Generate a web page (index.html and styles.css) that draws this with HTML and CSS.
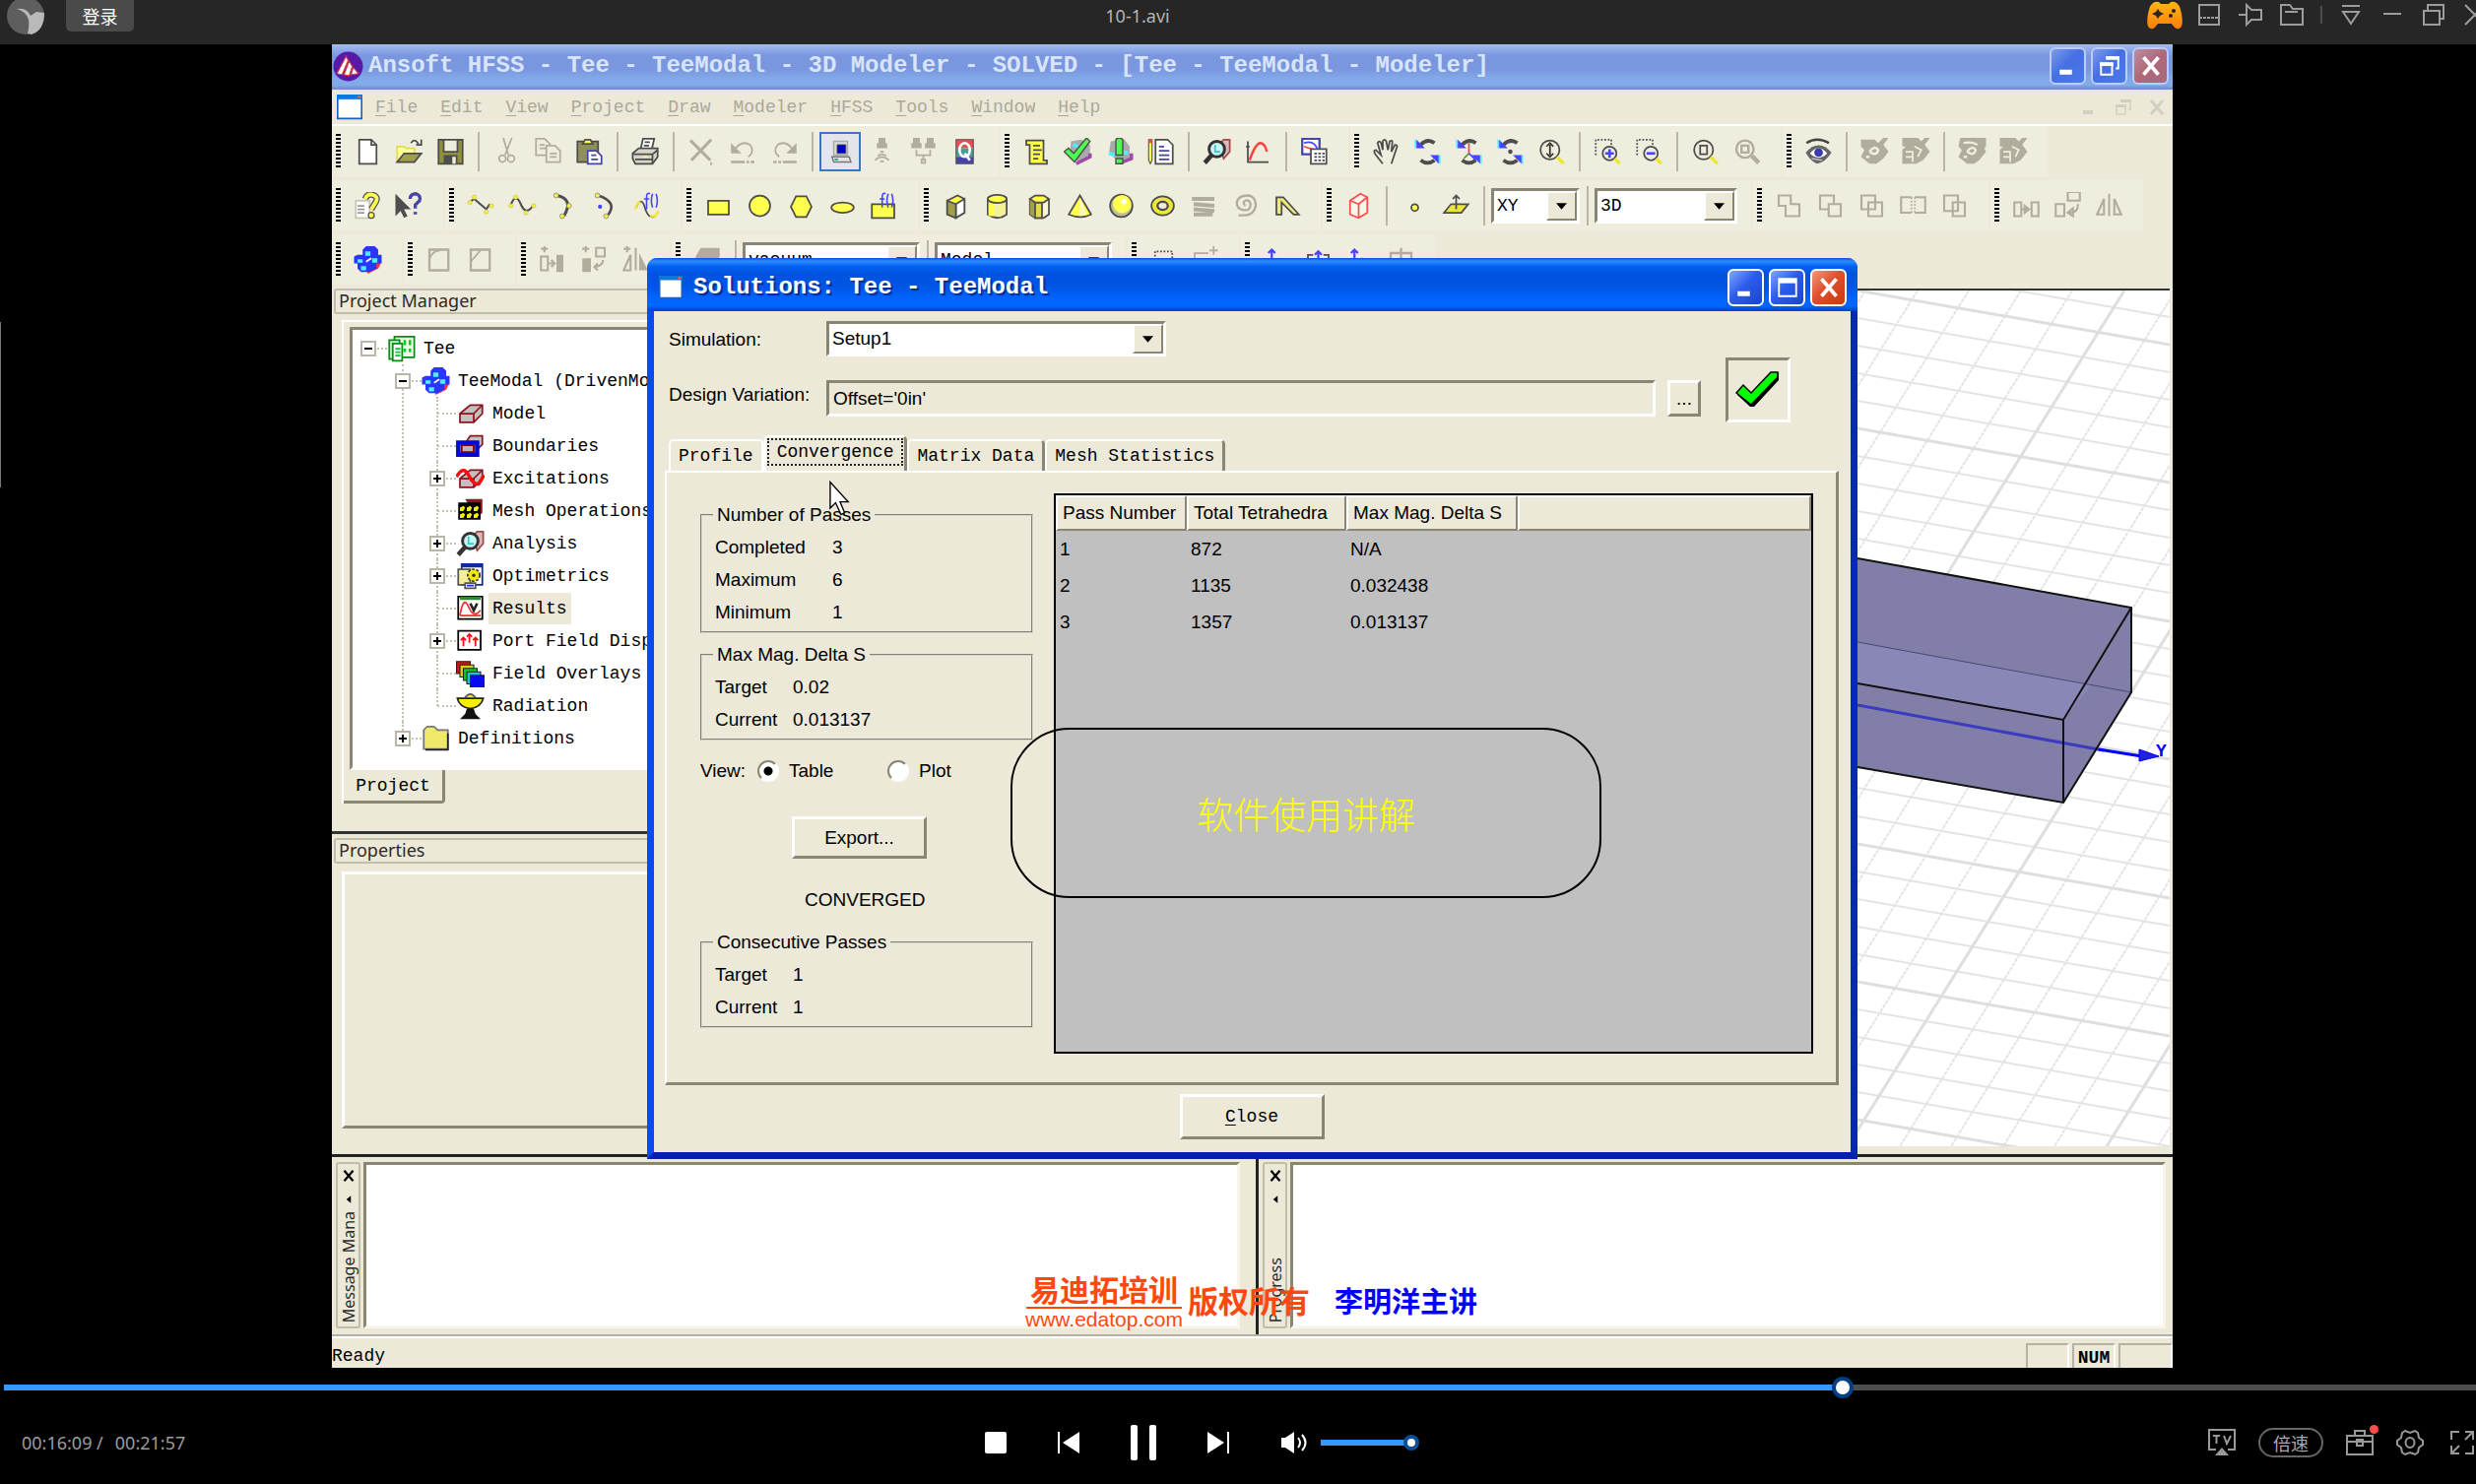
FILE: index.html
```html
<!DOCTYPE html>
<html lang="zh-CN">
<head>
<meta charset="utf-8">
<meta name="viewport" content="width=device-width, initial-scale=1">
<title>10-1.avi</title>
<link rel="stylesheet" href="styles.css">
</head>
<body>
<svg class="sprite" aria-hidden="true">
  <symbol id="new" viewBox="0 0 16 16"><path d="M3 1h7l3 3v11H3z" fill="#fff" stroke="#4d4d4d"/><path d="M10 1v3h3" fill="none" stroke="#4d4d4d"/></symbol>
  <symbol id="open" viewBox="0 0 16 16"><path d="M1 14V5h4l1 1h5v3" fill="#ffff9d" stroke="#e0dc50"/><path d="M1 14l4-5h10l-4 5z" fill="#a0a048" stroke="#4d4d4d"/><path d="M9 3q2-3 4 0v1m2-3v3h-3" fill="none" stroke="#4d4d4d"/></symbol>
  <symbol id="save" viewBox="0 0 16 16"><path d="M1 1h14v14H1z" fill="#8f8f3c" stroke="#4d4d4d"/><path d="M4 1h8v7H4z" fill="#efedde" stroke="#4d4d4d"/><path d="M4 10h8v5H4z" fill="#4d4d4d"/><path d="M9 11h2v4H9z" fill="#efedde"/></symbol>
  <symbol id="cut" viewBox="0 0 16 16"><g fill="none" stroke="#b0ad9c"><path d="M6 0l3 10M11 0L7 10"/><circle cx="5.500" cy="12" r="2"/><circle cx="10.500" cy="12" r="2"/></g></symbol>
  <symbol id="copy" viewBox="0 0 16 16"><g fill="#efedde" stroke="#b0ad9c"><path d="M1 .5h5l3 3V10H1z"/><path d="M7 4.500h5l3 3V14H7z"/><path d="M3 4h3M3 6h4M9 9h4M9 11h4" /></g></symbol>
  <symbol id="paste" viewBox="0 0 16 16"><path d="M1 2h12v12H1z" fill="#8f8f5a" stroke="#4d4d4d"/><path d="M4 3.500h6L8.500 1h-3z" fill="#ffff4d" stroke="#4d4d4d"/><path d="M7 7.500h5l3 3V15H7z" fill="#fff" stroke="#4646a8"/><path d="M9 10h3M9 12.500h4" stroke="#4646a8"/></symbol>
  <symbol id="print" viewBox="0 0 16 16"><path d="M5 7l1.500-6.500H13L11.500 7z" fill="#fff" stroke="#4d4d4d"/><path d="M7.500 2.500h3M7 4.500h3" stroke="#4d4d4d"/><path d="M.5 9L4 6h11v5l-3 4H2L.5 12z" fill="#d8d6c8" stroke="#4d4d4d"/><path d="M1 9.500h11L15 7M2 12.500h10M12 9.500V15" fill="none" stroke="#4d4d4d"/><path d="M7 11h2" stroke="#ffff4d"/></symbol>
  <symbol id="del" viewBox="0 0 16 16"><path d="M1.500 1.500L13 13M13.500 1L2 13M13 15h1" stroke="#b0ad9c" stroke-width="1.800"/></symbol>
  <symbol id="undo" viewBox="0 0 16 16"><path d="M3 7q4-6 9-3 3 4-1 7" fill="none" stroke="#b0ad9c"/><path d="M1 3v6h6z" fill="#b0ad9c"/><path d="M1 14h8m1 0h1.500m1 0h2" stroke="#b0ad9c" stroke-width="1.500"/></symbol>
  <symbol id="redo" viewBox="0 0 16 16"><path d="M13 7Q9 1 4 4q-3 4 1 7" fill="none" stroke="#b0ad9c"/><path d="M15 3v6H9z" fill="#b0ad9c"/><path d="M15 14H7m-1 0H4.500m-1 0h-2" stroke="#b0ad9c" stroke-width="1.500"/></symbol>
  <symbol id="pc" viewBox="0 0 16 16"><path d="M4 2h8v8H4z" fill="#d9d9d9" stroke="#aaa" stroke-width=".8"/><path d="M6 4h5v5H6z" fill="#00c" stroke="#444" stroke-width=".5"/><path d="M3 11h10l1 3H4z" fill="#e4e4e4" stroke="#777" stroke-width=".8"/><path d="M4.500 12.500h2" stroke="#0a8"/></symbol>
  <symbol id="remote" viewBox="0 0 16 16"><path d="M6 0h4v3h1v3H5V3h1z" fill="#b0ad9c"/><path d="M7 8h2M5.500 10.500q2.500-2 5 0M4 13q4-4 8 0M7 14q1-1 2 0" fill="none" stroke="#b0ad9c"/></symbol>
  <symbol id="dist" viewBox="0 0 16 16"><path d="M2 0h4v3h1v3H1V3h1zM10 0h4v3h1v3H9V3h1z" fill="#b0ad9c"/><path d="M4 7v3h8V7M8 10v2M7 12.500h2v2H7z" fill="none" stroke="#b0ad9c"/></symbol>
  <symbol id="queue" viewBox="0 0 16 16"><path d="M3 1h10v5H3z" fill="#f04a52"/><path d="M3 6h10v5H3z" fill="#509c94"/><path d="M3 11h10v4H3z" fill="#4444a4"/><path d="M3 1h10v14H3z" fill="none" stroke="#555" stroke-width=".6"/><ellipse cx="8" cy="7" rx="3" ry="4" fill="none" stroke="#fff" stroke-width="1.500"/><path d="M8 9l3 4" stroke="#fff" stroke-width="1.500"/></symbol>
  <symbol id="notes" viewBox="0 0 16 16"><path d="M2 1.500h10V13h2v2H4V4H2z" fill="#ffff4d" stroke="#4d4d4d"/><path d="M6 4.500h4M6 7h5M6 9.500h4M6 12h3" stroke="#4d4d4d"/></symbol>
  <symbol id="validate" viewBox="0 0 16 16"><path d="M4 2l6-1 5 3v8l-6 2-6-2z" fill="#a9a9ad"/><path d="M7 15l8-4v-2" fill="none" stroke="#a04aa8" stroke-width="2"/><path d="M5 4l3 1M4 11h3" stroke="#4defff" stroke-width="2"/><path d="M0 8l2.500-2 3 3L13 0l2 2L6 14z" fill="#4dff4d" stroke="#4d4d4d" stroke-width=".8"/></symbol>
  <symbol id="analyze" viewBox="0 0 16 16"><path d="M3 2l8-1 3 4v7l-6 2-6-5z" fill="#a9a9ad"/><path d="M10 14l5-2V9" fill="none" stroke="#a04aa8" stroke-width="2"/><path d="M2 9l4 1M10 8l3 1" stroke="#4defff" stroke-width="2"/><path d="M6 1Q8 -1 10 1v9H6zM6 12h4v3H6z" fill="#4dff4d" stroke="#4d4d4d" stroke-width=".8"/></symbol>
  <symbol id="editnote" viewBox="0 0 16 16"><path d="M1 1h2v12l-1 2-1-2z" fill="#ffff4d" stroke="#4d4d4d" stroke-width=".6"/><path d="M1 1h2v2H1z" fill="#f44"/><path d="M5 1h7l3 3v11H5z" fill="#fff" stroke="#4d4d4d"/><path d="M7 5h3M7 7.500h6M7 10h6M7 12.500h6" stroke="#4646a8"/></symbol>
  <symbol id="lens" viewBox="0 0 16 16"><path d="M9 4l3-3h3.500v7L12 12z" fill="#d8b8b8" stroke="#a24a4a"/><circle cx="8" cy="6.500" r="4.500" fill="#c8f4f4" stroke="#333" stroke-width="1.700"/><path d="M7 4v4h3" fill="none" stroke="#3cc" /><path d="M5 10l-4 4.500" stroke="#333" stroke-width="2.600"/></symbol>
  <symbol id="curve" viewBox="0 0 16 16"><path d="M2 2v12h12M1 5h2" fill="none" stroke="#4d4d4d"/><path d="M3 13q3-9 6-10 3 0 4 5" fill="none" stroke="#ff4040" stroke-width="1.400"/></symbol>
  <symbol id="plots" viewBox="0 0 16 16"><path d="M1 .5h10v9H1z" fill="#fff" stroke="#4646a8" stroke-width="1.300"/><path d="M2 3q6-2 8 4" fill="none" stroke="#44f"/><path d="M2 5l6 2" stroke="#f44"/><path d="M6 6.500h9V15H6z" fill="#fff" stroke="#4d4d4d"/><path d="M8 9h6M8 11h6M8 13h6" stroke="#4d4d4d" stroke-dasharray="1.500 .8"/></symbol>
  <symbol id="hand" viewBox="0 0 16 16"><path d="M6 15l-4-5q-2-3 0-3l3 3-2-7q1-2 2 0l1 4V2q1-2 2 0l1 5 1-5q2-1 1.500 1l-.5 5 2-4q2 0 1 2l-3 9" fill="none" stroke="#4d4d4d"/></symbol>
  <symbol id="rotate" viewBox="0 0 16 16"><path d="M4 4q4-4 8-1M4 13q4 3 8 0" fill="none" stroke="#4d4d4d" stroke-width="2.200"/><path d="M1.500 1v5h5zM14.500 15v-5h-5z" fill="#4545ff"/><path d="M1 1v5M15 15v-5" stroke="#4defff"/></symbol>
  <symbol id="rotaxis" viewBox="0 0 16 16"><use href="#rotate"/><path d="M8 3v6" stroke="#f44"/><path d="M8 9l-3 3" stroke="#494"/><path d="M8 9l4 4" stroke="#44f"/></symbol>
  <symbol id="rotpt" viewBox="0 0 16 16"><use href="#rotate"/><circle cx="8" cy="8" r="1.300" fill="#4d4d4d"/></symbol>
  <symbol id="zoom" viewBox="0 0 16 16"><circle cx="7" cy="7" r="5.500" fill="#efedde" stroke="#4d4d4d"/><path d="M7 4v6M5 5l2-2 2 2M5 9l2 2 2-2" fill="none" stroke="#333"/><path d="M11 11l4 4" stroke="#ece83a" stroke-width="2"/></symbol>
  <symbol id="zin" viewBox="0 0 16 16"><path d="M1 10V1h9v3" fill="none" stroke="#4d4d4d" stroke-dasharray="1 1"/><circle cx="9" cy="9" r="4" fill="#efedde" stroke="#4d4d4d"/><path d="M6.500 9h5M9 6.500v5" stroke="#4545ff" stroke-width="1.500"/><path d="M12 12l3 3" stroke="#ece83a" stroke-width="2"/></symbol>
  <symbol id="zout" viewBox="0 0 16 16"><path d="M1 10V1h9v3" fill="none" stroke="#4d4d4d" stroke-dasharray="1 1"/><circle cx="9" cy="9" r="4" fill="#efedde" stroke="#4d4d4d"/><path d="M6.500 9h5" stroke="#4545ff" stroke-width="1.500"/><path d="M12 12l3 3" stroke="#ece83a" stroke-width="2"/></symbol>
  <symbol id="fit" viewBox="0 0 16 16"><circle cx="7" cy="7" r="5.500" fill="#efedde" stroke="#4d4d4d"/><path d="M5 4.500h4v5H5z" fill="none" stroke="#4d4d4d"/><path d="M11 11l4 4" stroke="#ece83a" stroke-width="2"/></symbol>
  <symbol id="fitoff" viewBox="0 0 16 16"><g fill="none" stroke="#b0ad9c" stroke-width="1.400"><circle cx="7" cy="6.500" r="5"/><path d="M5 4.500h4v4H5z"/><path d="M11 10.500l4 4" stroke-width="2.500"/></g></symbol>
  <symbol id="eye" viewBox="0 0 16 16"><path d="M1 3q6-4 13 0" fill="none" stroke="#444" stroke-width="1.400"/><path d="M.5 8.500Q8 0 15.500 8.500 12 14 7 15 3 13 .5 8.500z" fill="#666"/><path d="M3 9q5-6 10 0-5 5-10 0z" fill="#fff"/><circle cx="8" cy="8.500" r="2.500" fill="#3c3ca8"/><path d="M4 12l6 1" stroke="#bbb"/></symbol>
  <symbol id="eyex" viewBox="0 0 16 16"><path d="M0 1h8l2 2 3-3h3l-3 4 3 4-3 4-4 3H5l-5-4 2-4-2-2z" fill="#b0ad9c"/><path d="M5 8q3-4 5-1-1 4-5 1M3 11h2" fill="none" stroke="#efedde" stroke-width="1.500"/></symbol>
  <symbol id="eyebox" viewBox="0 0 16 16"><path d="M0 0h9l2 2 2-2h3l-3 4 3 4-4 5-4 2H0V7l2-2H0z" fill="#b0ad9c"/><path d="M2 8h4v6M2 11h4M7 5l4 2-2 4" fill="none" stroke="#efedde"/></symbol>
  <symbol id="eyeoff" viewBox="0 0 16 16"><path d="M1 0h15v5l-1 1 1 2-4 5-3 2H5l-5-4 2-4-2-2z" fill="#b0ad9c"/><path d="M5 8q3-4 5-1-1 4-5 1M3 3q5-1 8 1M3 11h2" fill="none" stroke="#efedde" stroke-width="1.300"/></symbol>
  <symbol id="help" viewBox="0 0 16 16"><path d="M1 5h8v10H1z" fill="#fff" stroke="#c8c6b4"/><path d="M2 8h4M2 10h4M2 12h4" stroke="#999"/><path d="M6.500 4q1-3 4-2.500 4 1 2 4.500l-2.500 4" fill="none" stroke="#4d4d4d" stroke-width="3.600"/><path d="M6.500 4q1-3 4-2.500 4 1 2 4.500l-2.500 4" fill="none" stroke="#ffff4d" stroke-width="2.200"/><circle cx="10" cy="13.500" r="1.700" fill="#ffff4d" stroke="#4d4d4d" stroke-width=".7"/></symbol>
  <symbol id="what" viewBox="0 0 16 16"><path d="M0 1v13l3-3 2 4 2-1-2-4h4z" fill="#4d4d4d"/><path d="M8.500 4q0-3 3.500-3 3 1 2 4l-2.500 2.500v2" fill="none" stroke="#4646a8" stroke-width="1.900"/><path d="M10.500 11.500h2V13h-2z" fill="#4646a8"/></symbol>
  <symbol id="line" viewBox="0 0 16 16"><path d="M1 6l3-2 7 6 2-3" fill="none" stroke="#4d4d4d" stroke-width="1.200"/><g fill="#f4f04a" stroke="#c9c53a" stroke-width=".4"><circle cx="1.500" cy="6" r="1.200"/><circle cx="4" cy="3" r="1.200"/><circle cx="11" cy="11.500" r="1.200"/><circle cx="14" cy="8" r="1.200"/></g></symbol>
  <symbol id="spline" viewBox="0 0 16 16"><path d="M1 8q3-8 6-1t7 1" fill="none" stroke="#4d4d4d" stroke-width="1.200"/><g fill="#f4f04a" stroke="#c9c53a" stroke-width=".4"><circle cx="1.200" cy="8" r="1.200"/><circle cx="4" cy="3" r="1.200"/><circle cx="10" cy="12" r="1.200"/><circle cx="14.500" cy="8" r="1.200"/></g></symbol>
  <symbol id="arc3" viewBox="0 0 16 16"><path d="M4 2q10 2 4 12" fill="none" stroke="#4d4d4d" stroke-width="1.700"/><g fill="#f4f04a" stroke="#777" stroke-width=".4"><circle cx="3.500" cy="2" r="1.400"/><circle cx="11" cy="8" r="1.400"/><circle cx="7" cy="14" r="1.400"/></g></symbol>
  <symbol id="arcc" viewBox="0 0 16 16"><path d="M4 2q12 4 5 12" fill="none" stroke="#4d4d4d" stroke-width="1.500"/><g fill="#f4f04a" stroke="#777" stroke-width=".4"><circle cx="3.500" cy="2" r="1.400"/><circle cx="8.500" cy="14" r="1.400"/></g><circle cx="5" cy="8.500" r="1.200" fill="#4545ff"/></symbol>
  <symbol id="fx" viewBox="0 0 16 16"><path d="M2 9q3-7 5 0t6 5" fill="none" stroke="#4d4d4d"/><path d="M1.500 10q1-4 3-4M10 14h3l2-3" fill="none" stroke="#ece83a" stroke-width="1.500"/><path d="M10 1q-2-1-2 2v7M6.500 4h3M11.500 1q-1.500 4 0 8M13.500 1q1.500 4 0 8" fill="none" stroke="#4545ff" stroke-width=".9"/></symbol>
  <symbol id="rect" viewBox="0 0 16 16"><path d="M2 5h12v8H2z" fill="#ffff4d" stroke="#4d4d4d"/></symbol>
  <symbol id="circle" viewBox="0 0 16 16"><circle cx="8" cy="8" r="6" fill="#ffff4d" stroke="#4d4d4d"/></symbol>
  <symbol id="hex" viewBox="0 0 16 16"><path d="M5 2.500h6l3 6-3 6H5l-3-6z" fill="#ffff4d" stroke="#4d4d4d"/></symbol>
  <symbol id="ell" viewBox="0 0 16 16"><ellipse cx="8" cy="9" rx="6.500" ry="3" fill="#ffff4d" stroke="#4d4d4d"/></symbol>
  <symbol id="rectfx" viewBox="0 0 16 16"><path d="M1 7h13v8H1z" fill="#ffff4d" stroke="#4d4d4d"/><path d="M9 1Q7 0 7 3v6M5.500 4h3M10.500 1q-1.500 4 0 8M12.500 1q1.500 4 0 8" fill="none" stroke="#4545ff" stroke-width=".9"/></symbol>
  <symbol id="box" viewBox="0 0 16 16"><path d="M3 5l6-3 4 2v8l-5 3-5-2z" fill="#ffff4d" stroke="#4d4d4d"/><path d="M8 7l5-3v8l-5 3z" fill="#fff" stroke="#4d4d4d"/><path d="M3 5l5 2v8l-5-2z" fill="#a0a048" stroke="#4d4d4d"/></symbol>
  <symbol id="cyl" viewBox="0 0 16 16"><path d="M2.500 4v9q5.500 4 11 0V4" fill="#f3f09a" stroke="#4d4d4d"/><path d="M3 5h3v9H3z" fill="#ffff4d"/><ellipse cx="8" cy="4" rx="5.500" ry="2.300" fill="#ffff4d" stroke="#4d4d4d"/></symbol>
  <symbol id="prism" viewBox="0 0 16 16"><path d="M3 4v9l3 2h5l3-2V4" fill="#f7f7dc" stroke="#4d4d4d"/><path d="M3 4l3 2v9l-3-2z" fill="#a0a048"/><path d="M6 6h4v9H6z" fill="#e0dc40" stroke="#4d4d4d"/><path d="M3 4l3-2h5l3 2-3 2H6z" fill="#ffff4d" stroke="#4d4d4d"/></symbol>
  <symbol id="cone" viewBox="0 0 16 16"><path d="M8 2l6.500 11q-6 3-13 0z" fill="#ffff4d" stroke="#4d4d4d"/><path d="M8 3l4 10-4 1z" fill="#fff9c0"/></symbol>
  <symbol id="sphere" viewBox="0 0 16 16"><circle cx="8" cy="8" r="6.500" fill="#c0bd9a" stroke="#4d4d4d"/><circle cx="8.500" cy="7" r="5.300" fill="#ffff4d"/><circle cx="9.500" cy="5.500" r="1.600" fill="#fffff0"/></symbol>
  <symbol id="torus" viewBox="0 0 16 16"><ellipse cx="8" cy="8" rx="6.500" ry="5.500" fill="#ece83a" stroke="#4d4d4d"/><ellipse cx="8" cy="8" rx="3" ry="2.300" fill="#efedde" stroke="#4d4d4d" stroke-width="1.300"/></symbol>
  <symbol id="helix" viewBox="0 0 16 16"><path d="M1 4h13M2 7l12 1M2 10l12 1M2 13h11" stroke="#b0ad9c" stroke-width="2.200"/></symbol>
  <symbol id="spiral" viewBox="0 0 16 16"><path d="M8 8q-2-2 0-3t3 2q0 4-4 3.500T3 6q1-4 6-4t5 6q-1 5-6 5.500H4" fill="none" stroke="#b0ad9c" stroke-width="1.300"/></symbol>
  <symbol id="bond" viewBox="0 0 16 16"><path d="M2 13V3h4l9 10h-3L5 6v7z" fill="#ecea7a" stroke="#4d4d4d"/></symbol>
  <symbol id="redbox" viewBox="0 0 16 16"><path d="M3 5l6-4 4 2v9l-5 3-5-2zM3 5l5 2v8M8 7l5-4" fill="#fbf4ea" stroke="#ff4d4d"/></symbol>
  <symbol id="point" viewBox="0 0 16 16"><circle cx="8" cy="9" r="2" fill="#ffff4d" stroke="#4d4d4d"/></symbol>
  <symbol id="plane" viewBox="0 0 16 16"><path d="M1 12l4-5h10l-4 5z" fill="#ece83a" stroke="#4d4d4d"/><path d="M8 10V2M6 4l2-2 2 2" fill="none" stroke="#4d4d4d"/></symbol>
  <symbol id="unite" viewBox="0 0 16 16"><path d="M2 2h7v5h5v7H6V8H2z" fill="none" stroke="#b0ad9c" stroke-width="1.200"/></symbol>
  <symbol id="subtract" viewBox="0 0 16 16"><path d="M10 7V2H2v8h5M7 7h7v7H7z" fill="none" stroke="#b0ad9c" stroke-width="1.200"/></symbol>
  <symbol id="intersect" viewBox="0 0 16 16"><path d="M2 2h8v8H2zM6 6h8v8H6z" fill="none" stroke="#b0ad9c" stroke-width="1.200"/></symbol>
  <symbol id="split" viewBox="0 0 16 16"><path d="M7 3H1v9h6M9 3h6v9H9" fill="none" stroke="#b0ad9c" stroke-width="1.200"/><path d="M7 3v9M9 3v9" stroke="#b0ad9c" stroke-dasharray="1 1"/></symbol>
  <symbol id="imprint" viewBox="0 0 16 16"><path d="M2 2h8v9H2zM7 6h7v8H7zM7 6h3v5H7z" fill="none" stroke="#b0ad9c" stroke-width="1.200"/></symbol>
  <symbol id="move" viewBox="0 0 16 16"><path d="M1 6h4v8H1zM11 6h4v8h-4zM5 10h4M7 8l2.500 2L7 12z" fill="none" stroke="#b0ad9c" stroke-width="1.200"/></symbol>
  <symbol id="turn" viewBox="0 0 16 16"><path d="M1 7h5v7H1zM8 0h7v5H8zM14 7q0 5-5 5M11 9.500L8 12l3 2z" fill="none" stroke="#b0ad9c" stroke-width="1.200"/></symbol>
  <symbol id="mirror" viewBox="0 0 16 16"><path d="M8 1v13M5 4v9H1zM11 4v9h4z" fill="none" stroke="#b0ad9c" stroke-width="1.200"/></symbol>
  <symbol id="cubes" viewBox="0 0 16 16"><path d="M5 9h11l-2 4-6 3z" fill="#f33"/><path d="M7 0h5l2 2v3h2v5h-3v3l-4 2H4l-2-2v-3H0V6l2-1h3V2z" fill="#2a35ff"/><path d="M6.500 3h3v2.500h-3zM2 7.500h3v2H2zM10.500 7h3v2.500h-3zM4 11.500h3V14H4z" fill="#4defff"/><path d="M7 9l3-2" stroke="#fff"/></symbol>
  <symbol id="fillet" viewBox="0 0 16 16"><path d="M2 2h11v12H2z" fill="none" stroke="#b0ad9c" stroke-width="1.300"/><path d="M2 8q1-5 6-5.500" fill="none" stroke="#b0ad9c"/></symbol>
  <symbol id="chamfer" viewBox="0 0 16 16"><path d="M2 2h11v12H2z" fill="none" stroke="#b0ad9c" stroke-width="1.300"/><path d="M2 9l6-7" fill="none" stroke="#b0ad9c"/></symbol>
  <symbol id="dupmove" viewBox="0 0 16 16"><path d="M1 6h4v8H1zM3-.500v4M1 1.500h4M5 10h4M7 8l2 2-2 2" fill="none" stroke="#b0ad9c" stroke-width="1.200"/><path d="M10 5h4v10h-4z" fill="#b0ad9c"/></symbol>
  <symbol id="dupturn" viewBox="0 0 16 16"><path d="M9 1h5v5H9zM3-.500v4M1 1.500h4M13 8q0 3-4 4M10 10l-2 2 2 2" fill="none" stroke="#b0ad9c" stroke-width="1.200"/><path d="M1 7h5v8H1z" fill="#b0ad9c"/></symbol>
  <symbol id="dupmirror" viewBox="0 0 16 16"><path d="M8 1v13M5 5v9H1zM3-.500v4M1 1.500h4" fill="none" stroke="#b0ad9c" stroke-width="1.200"/><path d="M10 4v10h5z" fill="#b0ad9c"/></symbol>
  <symbol id="slab" viewBox="0 0 16 16"><path d="M4 1h11v5l-4 5H1V6z" fill="#b0ad9c"/></symbol>
  <symbol id="select" viewBox="0 0 16 16"><path d="M3 12V3h10v9" fill="none" stroke="#4d4d4d" stroke-dasharray="1 1"/></symbol>
  <symbol id="selplus" viewBox="0 0 16 16"><path d="M2 12V4h8M13 0v5M10.500 2.500h5" fill="none" stroke="#b0ad9c"/></symbol>
  <symbol id="axis" viewBox="0 0 16 16"><path d="M5 2v7h6M3 4l2-2 2 2M9 7l2 2-2 2" fill="none" stroke="#4545ff" stroke-width="1.300"/></symbol>
  <symbol id="axisarc" viewBox="0 0 16 16"><path d="M2 8V5h3M14 8V5h-3" fill="none" stroke="#4d4d4d"/><path d="M8 10V3M6 5l2-2 2 2" fill="none" stroke="#4545ff" stroke-width="1.300"/></symbol>
  <symbol id="face" viewBox="0 0 16 16"><path d="M2 10V4h12v6M8 10V1" fill="none" stroke="#b0ad9c" stroke-width="1.300"/></symbol>
  <symbol id="win" viewBox="0 0 16 16"><path d="M.5.500h15v14.500H.5z" fill="#fffffb" stroke="#1a5fc0"/><path d="M0 0h16v3H0z" fill="#0c78d8"/><path d="M13 1h2v1h-2z" fill="#f64"/></symbol>
  <symbol id="min" viewBox="0 0 16 16"><path d="M1 11h10v4H1z" fill="currentColor"/></symbol>
  <symbol id="max" viewBox="0 0 16 16"><path d="M1 1h14v14H1z" fill="none" stroke="currentColor" stroke-width="1.500"/><path d="M1 1h14v3.500H1z" fill="currentColor"/></symbol>
  <symbol id="restore" viewBox="0 0 16 16"><path d="M5 1h10v9h-2M1 6h9v9H1z" fill="none" stroke="currentColor" stroke-width="1.500"/><path d="M5 0h11v3H5zM0 5h11v3H0z" fill="currentColor"/></symbol>
  <symbol id="x" viewBox="0 0 16 16"><path d="M2 1l12 14M14 1L2 15" stroke="currentColor" stroke-width="3"/></symbol>
  <symbol id="drop" viewBox="0 0 12 8"><path d="M0 1h12L6 8z" fill="#000"/></symbol>
  <symbol id="t-project" viewBox="0 0 16 16"><path d="M4 1h11.500v12H4z" fill="#efffe9" stroke="#0a8a1a"/><path d="M10 3v3M13 3v3M10 8v2M13 8v2" stroke="#0c2" stroke-width="1.500"/><path d="M1 3h6v11H1z" fill="#cdf5cd" stroke="#0a8a1a"/><path d="M3 5h5.500v10H3z" fill="#fff" stroke="#0a8a1a"/><path d="M4.500 8h3M4.500 10h3M4.500 12h3" stroke="#0c2"/></symbol>
  <symbol id="t-box" viewBox="0 0 16 16"><path d="M2 8l6-5h7v5l-5 5H2z" fill="#c5bfc0" stroke="#8a1420"/><path d="M2 8h8v5M10 8l5-5" fill="none" stroke="#8a1420"/></symbol>
  <symbol id="t-bound" viewBox="0 0 16 16"><path d="M4 8l4-6h7v5l-5 5z" fill="#c5bfc0" stroke="#8a1420"/><path d="M1 6h11v7H1z" fill="#b8b4b4" stroke="#0008d8" stroke-width="2.500"/><path d="M3 7.500h7v4H3z" fill="none" stroke="#700"/></symbol>
  <symbol id="t-exc" viewBox="0 0 16 16"><use href="#t-box"/><path d="M0 7q4-7 7-1t6 5l3-5" fill="none" stroke="#f01010" stroke-width="2"/></symbol>
  <symbol id="t-mesh" viewBox="0 0 16 16"><path d="M5 1h10v8l-3 3z" fill="#8a1420"/><path d="M1 3h13v10H1z" fill="#000"/><path d="M2 6l2-1 1 1-1 2H2zM6 6l2-1 1 1-1 2H6zM10 6l2-1 1 1-1 2h-2zM2 10l2-1 1 1-1 2H2zM6 10l2-1 1 1-1 2H6zM10 10l2-1 1 1-1 2h-2z" fill="#f0ec10"/></symbol>
  <symbol id="t-opt" viewBox="0 0 16 16"><path d="M3 1h12v12H3z" fill="#fff" stroke="#112a9c"/><path d="M3 1h12v2H3z" fill="#112a9c"/><path d="M1 4h7v9H1z" fill="#f4f09a" stroke="#555"/><circle cx="10" cy="7.500" r="3.500" fill="#f4e80a" stroke="#333" stroke-dasharray="1.500 1"/><circle cx="10" cy="7.500" r="1" fill="#333"/><path d="M5 12h6v3H5z" fill="#fff" stroke="#555"/><path d="M6 13.500h4" stroke="#22f"/></symbol>
  <symbol id="t-res" viewBox="0 0 16 16"><path d="M1 1h14v13H1z" fill="#fff" stroke="#000"/><path d="M2 1h12v2H2z" fill="#2a8a2a"/><path d="M2 12q2-12 5-5t7 2M2 12h12" fill="none" stroke="#f03030"/><path d="M8 5l2 4 2-4" fill="none" stroke="#222" stroke-width="1.500"/></symbol>
  <symbol id="t-port" viewBox="0 0 16 16"><path d="M1 2h13v11H1z" fill="#fff" stroke="#000"/><path d="M4 11V6M7.500 9V4M11 11V6M2.500 7.500L4 6l1.500 1.500M6 5.500L7.500 4 9 5.500M9.500 7.500L11 6l1.500 1.500" fill="none" stroke="#f01010"/></symbol>
  <symbol id="t-over" viewBox="0 0 16 16"><g stroke="#222" stroke-width=".6"><path d="M0 1h8v7H0z" fill="#c81414"/><path d="M2 3h8v7H2z" fill="#d8cf10"/><path d="M4 5h8v7H4z" fill="#10c820"/><path d="M6 7h8v7H6z" fill="#10c8e0"/><path d="M8 9h8v7H8z" fill="#0a0af0"/></g></symbol>
  <symbol id="t-rad" viewBox="0 0 16 16"><path d="M5 3q3-4 6 0" fill="#f4ec10" stroke="#555"/><path d="M.5 3.500h15q-1 5-7.500 6-6.500-1-7.500-6z" fill="#f6ee08" stroke="#222"/><path d="M6 9.500h4l1 3 3 3H2l3-3z" fill="#111"/></symbol>
  <symbol id="t-fold" viewBox="0 0 16 16"><path d="M1 14V3l2-2h4l2 2h6v11z" fill="#efe86a" stroke="#777"/><path d="M2 14.500h13V5" fill="none" stroke="#222"/></symbol>
</svg>

<div class="player">
  <header class="topbar">
    <a class="avatar" href="#" aria-label="Account"><svg viewBox="0 0 40 36"><ellipse cx="20" cy="16" rx="19" ry="19" fill="#5e5e5e"/><path d="M11 9q10-2 14 7l6-4 8 1q0 18-13 22l-4-1q2-8 1-14-2-8-12-11z" fill="#b9b9b9"/></svg></a>
    <button class="login">登录</button>
    <h1 class="clip-name">10-1.avi</h1>
    <nav class="window-tools">
      <button aria-label="Games"><svg viewBox="0 0 38 30"><defs><linearGradient id="pad" x2="0" y2="1"><stop stop-color="#ffb418"/><stop offset="1" stop-color="#ff7e08"/></linearGradient></defs><path d="M9 1q4-1 6 2h8q2-3 6-2 5 1 7 12 2 11-1 14-4 4-9-4H12q-5 8-9 4-3-3-1-14Q4 2 9 1z" fill="url(#pad)"/><path d="M12 8l2 3 4 2-4 2-2 3-2-3-4-2 4-2z" fill="#262626"/><circle cx="28" cy="10" r="2" fill="#262626"/><circle cx="25" cy="15" r="2" fill="#262626"/></svg></button>
      <button aria-label="Mini mode"><svg viewBox="0 0 24 24"><path d="M2 2h20v20H2z"/><path d="M2 15h20" stroke-dasharray="3 1"/></svg></button>
      <button aria-label="Pin"><svg viewBox="0 0 24 24"><path d="M0 12h8M8 2v20l5-5h10V7H13z"/></svg></button>
      <button aria-label="Open file"><svg viewBox="0 0 24 24"><path d="M1 2h9l3 4h10v16H1zM5 9h13"/></svg></button>
      <span class="tool-rule"></span>
      <button aria-label="Menu"><svg viewBox="0 0 24 24"><path d="M3 3h18M4 9h16l-8 12z"/></svg></button>
      <button aria-label="Minimize"><svg viewBox="0 0 24 24"><path d="M3 11h18"/></svg></button>
      <button aria-label="Restore"><svg viewBox="0 0 24 24"><path d="M2 8h16v14H2zM6 8V2h16v14h-4"/></svg></button>
      <button aria-label="Close"><svg viewBox="0 0 24 24"><path d="M2 2l20 20M22 2L2 22"/></svg></button>
    </nav>
  </header>

  <main class="stage">
    <span class="edge-handle"></span>
    <section class="hfss">
      <div class="app-title">
        <svg class="app-logo" viewBox="0 0 30 30"><circle cx="15" cy="15" r="14.500" fill="#5a1aa8"/><path d="M4 22L13 5l2 4-6 14zM11 23l5-13 3 5-3 9zM18 23l2-7 5 6z" fill="#fff" stroke="#e0403c"/></svg>
        <h2>Ansoft HFSS - Tee - TeeModal - 3D Modeler - SOLVED - [Tee - TeeModal - Modeler]</h2>
        <div class="caption-buttons faded">
          <button aria-label="Minimize"><svg><use href="#min"/></svg></button>
          <button aria-label="Restore"><svg><use href="#restore"/></svg></button>
          <button class="close" aria-label="Close"><svg><use href="#x"/></svg></button>
        </div>
      </div>
      <nav class="menubar">
        <svg class="doc-icon"><use href="#win"/></svg>
        <a href="#"><u>F</u>ile</a><a href="#"><u>E</u>dit</a><a href="#"><u>V</u>iew</a><a href="#"><u>P</u>roject</a><a href="#"><u>D</u>raw</a><a href="#"><u>M</u>odeler</a><a href="#"><u>H</u>FSS</a><a href="#"><u>T</u>ools</a><a href="#"><u>W</u>indow</a><a href="#"><u>H</u>elp</a>
        <div class="child-buttons">
          <button aria-label="Minimize document"><svg><use href="#min"/></svg></button>
          <button aria-label="Restore document"><svg><use href="#restore"/></svg></button>
          <button aria-label="Close document"><svg><use href="#x"/></svg></button>
        </div>
      </nav>

      <div class="toolbars">
        <div class="toolbar-row">
          <div class="toolbar">
            <button aria-label="New"><svg><use href="#new"/></svg></button><button aria-label="Open"><svg><use href="#open"/></svg></button><button aria-label="Save"><svg><use href="#save"/></svg></button><i class="sep"></i>
            <button aria-label="Cut"><svg><use href="#cut"/></svg></button><button aria-label="Copy"><svg><use href="#copy"/></svg></button><button aria-label="Paste"><svg><use href="#paste"/></svg></button><i class="sep"></i>
            <button aria-label="Print"><svg><use href="#print"/></svg></button><i class="sep"></i>
            <button aria-label="Delete"><svg><use href="#del"/></svg></button><button aria-label="Undo"><svg><use href="#undo"/></svg></button><button aria-label="Redo"><svg><use href="#redo"/></svg></button><i class="sep"></i>
            <button class="pressed" aria-label="Local machine"><svg><use href="#pc"/></svg></button><button aria-label="Remote"><svg><use href="#remote"/></svg></button><button aria-label="Distributed"><svg><use href="#dist"/></svg></button><button aria-label="Queue"><svg><use href="#queue"/></svg></button>
          </div>
          <div class="toolbar">
            <button aria-label="List"><svg><use href="#notes"/></svg></button><button aria-label="Validate"><svg><use href="#validate"/></svg></button><button aria-label="Analyze all"><svg><use href="#analyze"/></svg></button><button aria-label="Edit notes"><svg><use href="#editnote"/></svg></button><i class="sep"></i>
            <button aria-label="Solution data"><svg><use href="#lens"/></svg></button><button aria-label="Report"><svg><use href="#curve"/></svg></button><i class="sep"></i>
            <button aria-label="Create report"><svg><use href="#plots"/></svg></button>
          </div>
          <div class="toolbar">
            <button aria-label="Pan"><svg><use href="#hand"/></svg></button><button aria-label="Rotate"><svg><use href="#rotate"/></svg></button><button aria-label="Rotate about axis"><svg><use href="#rotaxis"/></svg></button><button aria-label="Rotate about centre"><svg><use href="#rotpt"/></svg></button><button aria-label="Zoom"><svg><use href="#zoom"/></svg></button><i class="sep"></i>
            <button aria-label="Zoom in"><svg><use href="#zin"/></svg></button><button aria-label="Zoom out"><svg><use href="#zout"/></svg></button><i class="sep"></i>
            <button aria-label="Fit all"><svg><use href="#fit"/></svg></button><button aria-label="Fit selection"><svg><use href="#fitoff"/></svg></button>
          </div>
          <div class="toolbar">
            <button aria-label="Visibility"><svg><use href="#eye"/></svg></button><i class="sep"></i>
            <button aria-label="Hide selection"><svg><use href="#eyex"/></svg></button><button aria-label="Hide in view"><svg><use href="#eyebox"/></svg></button><i class="sep"></i>
            <button aria-label="Show selection"><svg><use href="#eyeoff"/></svg></button><button aria-label="Show in view"><svg><use href="#eyebox"/></svg></button>
          </div>
        </div>
        <div class="toolbar-row">
          <div class="toolbar">
            <button aria-label="Help"><svg><use href="#help"/></svg></button><button aria-label="Context help"><svg><use href="#what"/></svg></button>
          </div>
          <div class="toolbar">
            <button aria-label="Line"><svg><use href="#line"/></svg></button><button aria-label="Spline"><svg><use href="#spline"/></svg></button><button aria-label="Three-point arc"><svg><use href="#arc3"/></svg></button><button aria-label="Centre arc"><svg><use href="#arcc"/></svg></button><button aria-label="Equation curve"><svg><use href="#fx"/></svg></button>
          </div>
          <div class="toolbar">
            <button aria-label="Rectangle"><svg><use href="#rect"/></svg></button><button aria-label="Circle"><svg><use href="#circle"/></svg></button><button aria-label="Polygon"><svg><use href="#hex"/></svg></button><button aria-label="Ellipse"><svg><use href="#ell"/></svg></button><button aria-label="Equation surface"><svg><use href="#rectfx"/></svg></button>
          </div>
          <div class="toolbar">
            <button aria-label="Box"><svg><use href="#box"/></svg></button><button aria-label="Cylinder"><svg><use href="#cyl"/></svg></button><button aria-label="Polyhedron"><svg><use href="#prism"/></svg></button><button aria-label="Cone"><svg><use href="#cone"/></svg></button><button aria-label="Sphere"><svg><use href="#sphere"/></svg></button><button aria-label="Torus"><svg><use href="#torus"/></svg></button><button aria-label="Helix"><svg><use href="#helix"/></svg></button><button aria-label="Spiral"><svg><use href="#spiral"/></svg></button><button aria-label="Bondwire"><svg><use href="#bond"/></svg></button>
          </div>
          <div class="toolbar">
            <button aria-label="Region"><svg><use href="#redbox"/></svg></button><i class="sep"></i>
            <button aria-label="Point"><svg><use href="#point"/></svg></button><button aria-label="Plane"><svg><use href="#plane"/></svg></button><i class="sep"></i>
            <span class="combo plane-combo"><select aria-label="Drawing plane"><option>XY</option></select><svg><use href="#drop"/></svg></span><i class="sep"></i>
            <span class="combo mode-combo"><select aria-label="Movement mode"><option>3D</option></select><svg><use href="#drop"/></svg></span>
          </div>
          <div class="toolbar">
            <button aria-label="Unite"><svg><use href="#unite"/></svg></button><button aria-label="Subtract"><svg><use href="#subtract"/></svg></button><button aria-label="Intersect"><svg><use href="#intersect"/></svg></button><button aria-label="Split"><svg><use href="#split"/></svg></button><button aria-label="Imprint"><svg><use href="#imprint"/></svg></button>
          </div>
          <div class="toolbar">
            <button aria-label="Move"><svg><use href="#move"/></svg></button><button aria-label="Turn"><svg><use href="#turn"/></svg></button><button aria-label="Mirror"><svg><use href="#mirror"/></svg></button>
          </div>
        </div>
        <div class="toolbar-row">
          <div class="toolbar">
            <button aria-label="Insert design"><svg><use href="#cubes"/></svg></button>
          </div>
          <div class="toolbar">
            <button aria-label="Fillet"><svg><use href="#fillet"/></svg></button><button aria-label="Chamfer"><svg><use href="#chamfer"/></svg></button>
          </div>
          <div class="toolbar">
            <button aria-label="Duplicate along line"><svg><use href="#dupmove"/></svg></button><button aria-label="Duplicate around axis"><svg><use href="#dupturn"/></svg></button><button aria-label="Duplicate mirror"><svg><use href="#dupmirror"/></svg></button>
          </div>
          <div class="toolbar">
            <button aria-label="Material"><svg><use href="#slab"/></svg></button><i class="sep"></i>
            <span class="combo wide-combo"><select aria-label="Material name"><option>vacuum</option></select><svg><use href="#drop"/></svg></span><i class="sep"></i>
            <span class="combo wide-combo"><select aria-label="Object type"><option>Model</option></select><svg><use href="#drop"/></svg></span>
          </div>
          <div class="toolbar">
            <button aria-label="Select"><svg><use href="#select"/></svg></button><button aria-label="Add to selection"><svg><use href="#selplus"/></svg></button>
          </div>
          <div class="toolbar">
            <button aria-label="Relative axes"><svg><use href="#axis"/></svg></button><button aria-label="Rotated axes"><svg><use href="#axisarc"/></svg></button><button aria-label="Both axes"><svg><use href="#axis"/></svg></button><button aria-label="Face axes"><svg><use href="#face"/></svg></button>
          </div>
        </div>
      </div>

      <div class="workspace">
        <aside class="side">
          <section class="pane manager">
            <h3 class="pane-title">Project Manager</h3>
            <div class="pane-frame">
              <div class="tree-box">
                <ul class="tree">
                  <li><div class="node"><button class="twisty open" aria-label="Collapse"></button><svg><use href="#t-project"/></svg><span>Tee</span></div>
                    <ul>
                      <li><div class="node"><button class="twisty open" aria-label="Collapse"></button><svg><use href="#cubes"/></svg><span>TeeModal (DrivenModal)</span></div>
                        <ul>
                          <li><div class="node leaf"><svg><use href="#t-box"/></svg><span>Model</span></div></li>
                          <li><div class="node leaf"><svg><use href="#t-bound"/></svg><span>Boundaries</span></div></li>
                          <li><div class="node"><button class="twisty" aria-label="Expand"></button><svg><use href="#t-exc"/></svg><span>Excitations</span></div></li>
                          <li><div class="node leaf"><svg><use href="#t-mesh"/></svg><span>Mesh Operations</span></div></li>
                          <li><div class="node"><button class="twisty" aria-label="Expand"></button><svg><use href="#lens"/></svg><span>Analysis</span></div></li>
                          <li><div class="node"><button class="twisty" aria-label="Expand"></button><svg><use href="#t-opt"/></svg><span>Optimetrics</span></div></li>
                          <li><div class="node leaf"><svg><use href="#t-res"/></svg><span class="current">Results</span></div></li>
                          <li><div class="node"><button class="twisty" aria-label="Expand"></button><svg><use href="#t-port"/></svg><span>Port Field Display</span></div></li>
                          <li><div class="node leaf"><svg><use href="#t-over"/></svg><span>Field Overlays</span></div></li>
                          <li><div class="node leaf"><svg><use href="#t-rad"/></svg><span>Radiation</span></div></li>
                        </ul>
                      </li>
                      <li><div class="node"><button class="twisty" aria-label="Expand"></button><svg><use href="#t-fold"/></svg><span>Definitions</span></div></li>
                    </ul>
                  </li>
                </ul>
              </div>
              <button class="bottom-tab">Project</button>
            </div>
          </section>
          <section class="pane properties">
            <h3 class="pane-title">Properties</h3>
            <div class="empty-frame"></div>
          </section>
        </aside>
        <div class="viewport">
          <svg viewBox="0 0 317 869" preserveAspectRatio="xMaxYMin slice" role="img" aria-label="Waveguide tee model">
            <g fill="none" stroke="#e4e4e4" stroke-width="2">
              <path d="M0-28l317 55M0 28l317 55M0 56l317 55M0 84l317 55M0 112l317 55M0 168l317 55M0 196l317 55M0 224l317 55M0 252l317 55M0 309l317 55M0 337l317 55M0 365l317 55M0 393l317 55M0 449l317 55M0 477l317 55M0 505l317 55M0 534l317 55M0 590l317 55M0 618l317 55M0 646l317 55M0 674l317 55M0 730l317 55M0 758l317 55M0 786l317 55M0 814l317 55"/>
              <path stroke-dasharray="4 1" d="M8 0l-543 869M61 0l-543 869M113 0l-543 869M166 0l-543 869M218 0l-543 869M323 0l-543 869M376 0l-543 869M428 0l-543 869M481 0l-543 869M586 0L43 869M638 0L95 869M691 0L148 869M743 0L200 869M848 0L305 869"/>
            </g>
            <path fill="none" stroke="#dedede" stroke-width="3" d="M0 0l317 55M0 140l317 55M0 281l317 55M0 421l317 55M0 562l317 55M0 702l317 55M0 842l317 55M271 0l-543 869M533 0L-10 869M796 0L253 869"/>
            <path d="M0 272l278 50v86l-69 112L0 484z" fill="#7a78a3" fill-opacity=".95"/>
            <path d="M0 357l238 43-29 36L0 399z" fill="#8986b8"/>
            <path d="M0 357l278 51" stroke="#4a4870" fill="none"/>
            <path d="M0 421l250 46" stroke="#3c3abf" stroke-width="3"/>
            <path d="M245 466l50 8" stroke="#00f" stroke-width="3"/>
            <path d="M286 466l20 7-20 5z" fill="#22d" stroke="#00f"/>
            <path d="M0 272l278 50v86l-69 112L0 484M0 399l209 37 69-114M209 436v84" fill="none" stroke="#111" stroke-width="2"/>
            <text x="303" y="473" class="axis-name">Y</text>
          </svg>
        </div>
      </div>

      <div class="docks">
        <section class="dock"><div class="dock-bar"><button aria-label="Close pane"><svg><use href="#x"/></svg></button><button aria-label="Collapse pane"><svg viewBox="0 0 16 16"><path d="M11 3v10L5 8z"/></svg></button><span>Message Mana</span></div><div class="dock-view"></div></section>
        <section class="dock"><div class="dock-bar"><button aria-label="Close pane"><svg><use href="#x"/></svg></button><button aria-label="Collapse pane"><svg viewBox="0 0 16 16"><path d="M11 3v10L5 8z"/></svg></button><span>Progress</span></div><div class="dock-view"></div></section>
      </div>
      <footer class="status"><span>Ready</span><i></i><b>NUM</b><i class="last"></i></footer>

      <section class="dialog" role="dialog" aria-labelledby="dlg">
        <div class="dialog-title">
          <svg><use href="#win"/></svg>
          <h2 id="dlg">Solutions: Tee - TeeModal</h2>
          <div class="caption-buttons">
            <button aria-label="Minimize"><svg><use href="#min"/></svg></button>
            <button aria-label="Maximize"><svg><use href="#max"/></svg></button>
            <button class="close" aria-label="Close"><svg><use href="#x"/></svg></button>
          </div>
        </div>
        <form class="dialog-body">
          <div class="fields">
            <label for="sim">Simulation:</label>
            <span class="combo sim-combo"><select id="sim"><option>Setup1</option></select><svg><use href="#drop"/></svg></span>
            <label for="var">Design Variation:</label>
            <input id="var" class="variation" type="text" readonly value="Offset='0in'">
            <button type="button" class="raised browse" aria-label="Browse variations">...</button>
            <span class="valid"><svg viewBox="0 0 48 40"><path d="M3 25l7-9 8 8L39 3h6v7L20 37h-4z" fill="#000"/><path d="M2 23l7-8 8 8L37 2h7v5L17 35z" fill="#0f0" stroke="#000" stroke-width="1.500"/></svg></span>
          </div>
          <div class="tabs">
            <button type="button">Profile</button><button type="button" class="active"><span>Convergence</span></button><button type="button">Matrix Data</button><button type="button">Mesh Statistics</button>
          </div>
          <div class="tab-panel">
            <div class="summary">
              <fieldset class="passes"><legend>Number of Passes</legend>
                <dl><dt>Completed</dt><dd>3</dd><dt>Maximum</dt><dd>6</dd><dt>Minimum</dt><dd>1</dd></dl></fieldset>
              <fieldset><legend>Max Mag. Delta S</legend>
                <dl><dt>Target</dt><dd>0.02</dd><dt>Current</dt><dd>0.013137</dd></dl></fieldset>
              <div class="view-choice"><span>View:</span>
                <label><input type="radio" name="view" checked>Table</label>
                <label><input type="radio" name="view">Plot</label></div>
              <button type="button" class="raised export">Export...</button>
              <p class="state">CONVERGED</p>
              <fieldset><legend>Consecutive Passes</legend>
                <dl><dt>Target</dt><dd>1</dd><dt>Current</dt><dd>1</dd></dl></fieldset>
            </div>
            <div class="results">
              <table>
                <thead><tr><th class="c-pass">Pass Number</th><th class="c-tet">Total Tetrahedra</th><th class="c-mag">Max Mag. Delta S</th><th></th></tr></thead>
                <tbody><tr><td>1</td><td>872</td><td>N/A</td><td></td></tr><tr><td>2</td><td>1135</td><td>0.032438</td><td></td></tr><tr><td>3</td><td>1357</td><td>0.013137</td><td></td></tr></tbody>
              </table>
            </div>
          </div>
          <button type="button" class="raised close-dialog"><u>C</u>lose</button>
        </form>
        <svg class="cursor" viewBox="0 0 24 38"><path d="M1 1v29l6-6 6 13 4-2-5-12h9z" fill="#fff" stroke="#000" stroke-width="1.500"/></svg>
      </section>

      <p class="caption-card">软件使用讲解</p>
      <div class="watermark">
        <div class="brand"><strong>易迪拓培训</strong><span>www.edatop.com</span></div>
        <strong class="rights">版权所有</strong><em>李明洋主讲</em>
      </div>
    </section>
  </main>

  <footer class="controls">
    <input class="seek" type="range" min="0" max="1000" value="745" aria-label="Position">
    <div class="control-row">
      <div class="time"><span>00:16:09 /</span><span>00:21:57</span></div>
      <div class="transport">
        <button aria-label="Stop"><svg width="22" height="22" viewBox="0 0 22 22"><rect width="22" height="22" rx="2"/></svg></button>
        <button aria-label="Previous"><svg width="22" height="22" viewBox="0 0 22 22"><path d="M0 0h2v22H0zM22 0v22L5 11z"/></svg></button>
        <button aria-label="Pause"><svg width="26" height="36" viewBox="0 0 26 36"><rect width="7" height="36" rx="2"/><rect x="19" width="7" height="36" rx="2"/></svg></button>
        <button aria-label="Next"><svg width="22" height="22" viewBox="0 0 22 22"><path d="M20 0h2v22h-2zM0 0v22l17-11z"/></svg></button>
        <button aria-label="Mute"><svg width="30" height="22" viewBox="0 0 30 22"><path d="M1 6h4l9-6v22l-9-6H1z"/><path d="M18 6q4 5 0 10M22 3q7 8 0 16" fill="none" stroke="#fff" stroke-width="2"/></svg></button>
        <input class="volume" type="range" min="0" max="100" value="100" aria-label="Volume">
      </div>
      <div class="extras">
        <button aria-label="TV"><svg width="28" height="28" viewBox="0 0 28 28"><path d="M8 21H1V1h26v20h-7M5 7h7M8.500 7v8M16 7l3 8 4-8"/><path d="M7 27l7-8 7 8z" fill="#999" stroke="none"/></svg></button>
        <button class="speed">倍速</button>
        <button class="toolbox" aria-label="Toolbox"><svg width="28" height="28" viewBox="0 0 28 28"><path d="M1 7h26v19H1zM1 13h26M9 7V2h10v5M11 11h6v6h-6z"/></svg><i></i></button>
        <button aria-label="Settings"><svg width="28" height="28" viewBox="0 0 28 28"><path d="M9 2l5 2 5-2 3 2 1 5 4 3v4l-4 3-1 5-3 2-5-2-5 2-3-2-1-5-4-3v-4l4-3 1-5z"/><ellipse cx="14" cy="14" rx="4.500" ry="5"/></svg></button>
        <button aria-label="Full screen"><svg width="28" height="24" viewBox="0 0 28 24"><path d="M5 9V1h8M19 1h8v8M27 1l-8 8M5 15v8h8M5 23l8-8M27 15v8h-8"/></svg></button>
      </div>
    </div>
  </footer>
</div>
</body>
</html>
```

FILE: styles.css
```css
:root {
  --face: #ece9d8;
  --shade: #8a8674;
  --light: #ffffff;
  --ui: "Liberation Sans", Arial, sans-serif;
  --mono: "Liberation Mono", "Courier New", monospace;
  --tahoma: "Noto Sans", Tahoma, sans-serif;
  --cjk: "Noto Sans CJK SC", sans-serif;
}
* { box-sizing: border-box; }
body { margin: 0; background: #000; font-family: var(--ui); font-size: 19px; color: #000; }
h1, h2, h3, p, ul, dl, dd { margin: 0; padding: 0; }
button { padding: 0; border: 0; background: none; font: inherit; color: inherit; }
svg { display: block; }
.sprite { position: absolute; width: 0; height: 0; }

.player { display: flex; flex-direction: column; min-height: 100vh; }

/* Player top bar */
.topbar { display: flex; align-items: flex-start; height: 45px; background: #262626; overflow: hidden; }
.avatar { margin: 0 21px 0 6px; }
.avatar svg { width: 40px; height: 36px; }
.login { width: 69px; height: 32px; border-radius: 0 0 5px 5px; background: #4a4a4a; color: #fff; font: 18px/32px var(--cjk); }
.clip-name { flex: 1; text-align: center; font: 18px/32px var(--tahoma); color: #b4b4b4; }
.window-tools { display: flex; align-items: center; height: 30px; margin-right: -20px; }
.window-tools button { display: grid; place-items: center; width: 42px; height: 28px; }
.window-tools button:first-child { width: 48px; }
.window-tools svg { width: 24px; height: 24px; fill: none; stroke: #9c9c9c; stroke-width: 2; }
.window-tools button:first-child svg { width: 38px; height: 30px; stroke: none; }
.tool-rule { width: 2px; height: 18px; margin: 0 8px; background: #4c4c4c; }

/* Video picture */
.stage { flex: 1; position: relative; display: grid; grid-template-columns: 337fr 1869fr 308fr; }
.edge-handle { position: absolute; left: 0; top: 282px; width: 1px; height: 168px; background: #777; }
.hfss { grid-column: 2; position: relative; display: flex; flex-direction: column; min-width: 0; background: var(--face); overflow: hidden; }
.app-title { display: flex; align-items: center; height: 46px; padding: 0 4px 2px 1px; background: linear-gradient(#a3bdf0, #7a96df 25%, #7a96df 55%, #82a9e8 75%, #82a9e8 90%, #7286d6); }
.app-logo { width: 31px; height: 31px; margin-right: 5px; }
.app-title h2 { flex: 1; white-space: nowrap; font: bold 24px/28px var(--mono); color: #d8e4f8; }
.caption-buttons { display: flex; gap: 5px; }
.caption-buttons button { display: grid; place-items: center; width: 37px; height: 38px; border: 2px solid #fff; border-radius: 6px; background: linear-gradient(135deg, #86a5fb, #2c5ced 45%, #1846cf); color: #fff; }
.caption-buttons .close { background: linear-gradient(135deg, #f09a80, #e0502c 45%, #c83a10); }
.caption-buttons svg { width: 20px; height: 20px; }
.caption-buttons.faded button { border-color: #b9cdf6; background: linear-gradient(135deg, #7e9ceb, #466fe2 45%, #4a7ae8); }
.caption-buttons.faded .close { background: linear-gradient(135deg, #bd8da0, #b06878 50%, #a66a80); }

.menubar { display: flex; align-items: center; gap: 23px; height: 37px; padding: 1px 4px 0; border-bottom: 2px solid #fff; font: 18px/24px var(--mono); }
.menubar a { color: #aca899; text-decoration: none; }
.menubar u { text-underline-offset: 3px; }
.doc-icon { width: 28px; height: 26px; margin-right: -11px; }
.child-buttons { display: flex; margin-left: auto; margin-right: -5px; color: #d2cfc0; }
.child-buttons button { display: grid; place-items: center; width: 34px; height: 28px; }
.child-buttons svg { width: 16px; height: 16px; }

.toolbars { display: flex; flex-direction: column; gap: 4px; height: 165px; }
.toolbar-row { display: flex; gap: 2px; height: 51px; }
.toolbar { display: flex; align-items: center; padding: 0 14px 0 4px; background: #efedde; }
.toolbar::before { content: ""; width: 5px; height: 36px; margin-right: 6px; background: repeating-linear-gradient(#000 0 2px, transparent 2px 4px); }
.toolbar button { display: grid; place-items: center; flex: none; width: 42px; height: 40px; }
.toolbar button svg { width: 29px; height: 28px; overflow: visible; }
.toolbar .pressed { border: 2px solid #3c74c8; background: #e2e5ea; }
.sep { flex: none; width: 15px; height: 40px; background: linear-gradient(#b9b6a6, #b9b6a6) center / 2px 100% no-repeat; }

/* Drop-down boxes: the list and its arrow share one grid cell */
.combo { display: grid; align-items: stretch; height: 36px; border: 3px solid; border-color: var(--shade) #fff #fff var(--shade); background: #fff; }
.combo select, .combo svg { grid-area: 1 / 1; }
.combo select { width: 100%; min-width: 0; padding: 0 34px 0 3px; border: 0; appearance: none; background: #fff; color: #000; font: 18px/28px var(--mono); }
.combo svg { justify-self: end; width: 31px; height: 30px; padding: 8px; border: 2px solid; border-color: #fff var(--shade) var(--shade) #fff; background: var(--face); pointer-events: none; }
.plane-combo { width: 90px; }
.mode-combo { width: 145px; }
.wide-combo { width: 180px; }

/* Docked panes and model view */
.workspace { flex: 1; display: flex; border-bottom: 3px solid #222; }
.side { display: flex; flex-direction: column; flex: 0 0 400px; min-width: 0; }
.pane-title { height: 26px; margin: 0 2px; padding-left: 3px; border: 2px solid #c0bdac; border-radius: 3px; font: 18px/20px var(--tahoma); color: #2b2b2b; }
.manager { height: 554px; border-bottom: 3px solid #333; }
.pane-frame { margin: 6px 10px 0 10px; border: solid #fff; border-width: 2px 0 0 2px; }
.tree-box { margin: 5px 0 0 6px; height: 450px; padding: 2px 0 0 8px; border: 3px solid; border-color: var(--shade) #fff #fff var(--shade); background: #fff; overflow: hidden; }
.tree, .tree ul { list-style: none; }
.tree ul { margin-left: 35px; }
.tree li { position: relative; }
.tree ul li::before { content: ""; position: absolute; left: 7px; top: 0; bottom: 0; border-left: 2px dotted #c4c1b4; }
.tree ul li:last-child::before { bottom: auto; height: 17px; }
.node { position: relative; display: flex; align-items: center; height: 33px; white-space: nowrap; font: 18px/28px var(--mono); }
.node::before { content: ""; position: absolute; left: 8px; top: 16px; width: 19px; border-top: 2px dotted #c4c1b4; }
.node svg { flex: none; width: 29px; height: 28px; margin: 0 4px 0 11px; }
.node.leaf svg { margin-left: 27px; }
.node span { padding: 2px 4px; }
.current { background: var(--face); }
.twisty { position: relative; flex: none; width: 16px; height: 16px; border: 2px solid #b9b6a8; background: linear-gradient(#000, #000) center / 8px 2px no-repeat, linear-gradient(#000, #000) center / 2px 8px no-repeat, #fff; }
.twisty.open { background: linear-gradient(#000, #000) center / 8px 2px no-repeat, #fff; }
.bottom-tab { display: block; width: 103px; height: 34px; border: solid var(--shade); border-width: 0 3px 3px 0; border-radius: 0 0 4px 0; font: 18px/28px var(--mono); }
.properties { display: flex; flex-direction: column; flex: 1; padding-top: 4px; }
.empty-frame { flex: 1; margin: 8px 10px 26px; border: 3px solid; border-color: #fff #fff var(--shade) #fff; }
.viewport { flex: 1; min-width: 0; margin: 0 3px 8px 0; border-top: 2px solid #333; background: #fff; overflow: hidden; display: flex; justify-content: flex-end; }
.viewport svg { height: 100%; width: 317px; flex: none; }
.axis-name { font: bold 18px var(--mono); fill: #00f; }

.docks { display: grid; grid-template-columns: 941fr 928fr; height: 182px; border-bottom: 2px solid #b5b2a2; }
.dock { display: flex; gap: 3px; padding: 5px 7px 6px 4px; }
.dock:first-child { padding-right: 16px; border-right: 3px solid #222; }
.dock-bar { display: flex; flex-direction: column; align-items: center; width: 25px; border: 2px solid #c0bdac; border-radius: 3px; }
.dock-bar button { flex: none; height: 24px; display: grid; place-items: center; }
.dock-bar svg { width: 12px; height: 12px; }
.dock-bar span { flex: 1; width: 20px; writing-mode: vertical-rl; transform: rotate(180deg); white-space: nowrap; padding-top: 4px; font: 16px/20px var(--tahoma); color: #2b2b2b; }
.dock-view { flex: 1; border: 3px solid; border-color: var(--shade) #f8f6ea #f8f6ea var(--shade); background: #fff; }
.status { display: flex; gap: 3px; height: 32px; padding-top: 5px; border-top: 2px solid #fff; font: 18px/26px var(--mono); }
.status span { flex: 1; }
.status i, .status b { width: 44px; height: 30px; border: 2px solid; border-color: #b5b2a2 #fff #fff #b5b2a2; text-align: center; }
.status .last { width: 55px; }

/* Solutions dialog floats over the modeler */
.dialog { position: absolute; left: 320px; right: 320px; top: 217px; border: solid; border-width: 0 7px 7px; border-color: transparent #0828b8 #0620a8 #0a4ce8; border-radius: 10px 10px 0 0; background: var(--face); }
.dialog-title { display: flex; align-items: center; gap: 9px; height: 54px; margin: 0 -7px; padding: 6px 11px 0 10px; border-radius: 10px 10px 0 0; background: linear-gradient(#0a50d8, #2f8cff 6%, #0060f0 16%, #0053e0 30%, #0055e6 55%, #0066ff 78%, #0066ff 90%, #0040c8); }
.dialog-title > svg { width: 28px; height: 24px; }
.dialog-title h2 { flex: 1; font: bold 24px/28px var(--mono); color: #fff; text-shadow: 2px 2px 1px #0a2a90; }
.dialog-body { display: flex; flex-direction: column; padding: 10px 12px 13px 11px; }
.fields { display: grid; grid-template-columns: 160px 1fr 34px 66px; grid-template-rows: 36px 41px; row-gap: 20px; padding: 0 74px 0 4px; }
.fields label { grid-column: 1; line-height: 38px; }
.fields label[for="var"] { grid-row: 2; }
.sim-combo { grid-row: 1; grid-column: 2 / 4; width: 345px; }
.sim-combo select, .variation { font: 19px/28px var(--ui); }
.variation { grid-row: 2; grid-column: 2; height: 37px; margin: 4px 12px 0 0; padding: 0 4px; border: 3px solid; border-color: var(--shade) #fff #fff var(--shade); background: var(--face); outline: none; }
.raised { border: 3px solid; border-color: #fff var(--shade) var(--shade) #fff; background: var(--face); }
.browse { grid-row: 2; grid-column: 3; height: 37px; margin-top: 4px; }
.valid { grid-row: 1 / 3; grid-column: 4; align-self: end; display: grid; place-items: center; height: 66px; margin: 0 -25px -6px 25px; border: 3px solid; border-color: var(--shade) #fff #fff var(--shade); }
.valid svg { width: 48px; height: 40px; }
.tabs { display: flex; align-items: flex-end; margin-top: 19px; padding-left: 4px; font: 18px/24px var(--mono); }
.tabs button { height: 32px; padding: 0 8px; border: solid; border-width: 2px 3px 0 2px; border-color: #fff var(--shade) #fff #fff; border-radius: 5px 5px 0 0; }
.tabs button:first-child { border-right-color: #fff; }
.tabs .active { height: 36px; padding: 0 1px 4px; }
.tabs .active span { display: block; padding: 0 8px; border: 2px dotted #222; }
.tab-panel { display: flex; gap: 21px; padding: 21px 23px 29px 34px; border: solid; border-width: 2px 3px 3px 2px; border-color: #fff var(--shade) var(--shade) #fff; }
.summary { flex: 0 0 338px; padding: 10px 0 16px; }
fieldset { min-width: 0; margin: 0 0 10px; padding: 5px 0 2px 13px; border: 2px groove #fff; border-color: #d6d3c4; }
legend { margin-left: -2px; padding: 0 4px; line-height: 24px; }
dl { display: grid; grid-template-columns: 79px 1fr; grid-auto-rows: 33px; line-height: 32px; }
.passes dl { grid-template-columns: 119px 1fr; }
.view-choice { display: flex; align-items: center; height: 30px; margin: 16px 0 31px; }
.view-choice span { width: 58px; }
.view-choice label { display: flex; align-items: center; gap: 10px; width: 132px; }
.view-choice input { appearance: none; width: 22px; height: 22px; margin: 0; border: 2px solid; border-color: var(--shade) #fff #fff var(--shade); border-radius: 50%; background: #fff; }
.view-choice input:checked { background: radial-gradient(#000 0 4px, #fff 5px); }
.export { display: block; width: 137px; height: 43px; margin-left: 93px; }
.state { margin: 30px 0 19px 106px; line-height: 24px; }
.results { flex: 1; border: 2px solid #000; background: #c0c0c0; }
table { width: 100%; border-collapse: separate; border-spacing: 0; table-layout: fixed; }
th { height: 36px; padding: 0 5px; border: 2px solid; border-color: #fff var(--shade) var(--shade) #fff; background: var(--face); font-weight: normal; text-align: left; white-space: nowrap; }
td { height: 37px; padding: 0 4px; }
.c-pass { width: 133px; }
.c-tet { width: 162px; }
.c-mag { width: 174px; }
.close-dialog { align-self: center; width: 147px; height: 46px; margin-top: 9px; font: 18px/24px var(--mono); }
.close-dialog u { text-underline-offset: 3px; }
.cursor { position: absolute; left: 178px; top: 225px; width: 22px; height: 38px; }

/* Lecture graphics over the picture */
.caption-card { position: absolute; left: 689px; top: 694px; display: grid; place-items: center; width: 600px; height: 173px; border: 2px solid #000; border-radius: 60px; color: #ff0; font: 300 37px/46px var(--cjk); }
.watermark { position: absolute; left: 704px; top: 1244px; display: flex; align-items: center; gap: 5px; color: #ff4810; font: 30px/36px var(--cjk); }
.brand { display: flex; flex-direction: column; align-items: center; }
.brand strong { border-bottom: 2px solid #ff4810; padding: 0 4px; line-height: 38px; }
.brand span { font: 21px/22px var(--ui); }
.watermark em { margin-left: 20px; color: #00f; font-style: normal; font-weight: bold; font-size: 29px; }
.rights { font-size: 31px; }

/* Player controls */
.controls { height: 119px; background: #000; }
.seek, .volume { display: block; appearance: none; margin: 0; height: 22px; background: linear-gradient(90deg, #39f 0 74%, #4d4d4d 74%) center / 100% 6px no-repeat; }
.seek { width: calc(100% - 4px); margin: 0 0 0 4px; }
.volume { width: 96px; margin-left: -41px; background: linear-gradient(#39f, #39f) center / 100% 6px no-repeat; }
.seek::-webkit-slider-thumb { appearance: none; width: 14px; height: 14px; border-radius: 50%; background: #fff; box-shadow: 0 0 0 4px #003f80; }
.volume::-webkit-slider-thumb { appearance: none; width: 8px; height: 8px; border-radius: 50%; background: #fff; box-shadow: 0 0 0 4px #0a4f96; }
.controls { padding-top: 9px; }
.control-row { display: grid; grid-template-columns: 1000fr 443px 1071fr; align-items: center; height: 66px; margin-top: 12px; }
.time { display: flex; gap: 12px; padding-left: 22px; color: #9c9c9c; font: 18px/24px var(--tahoma); }
.transport { display: flex; align-items: center; gap: 52px; }
.transport svg { fill: #fff; }
.extras { display: flex; align-items: center; justify-content: flex-end; gap: 23px; padding-right: 2px; }
.extras svg { fill: none; stroke: #999; stroke-width: 2; }
.speed { width: 66px; height: 30px; border: 2px solid #666; border-radius: 15px; color: #aaa; font: 18px/24px var(--cjk); }
.toolbox { position: relative; }
.toolbox i { position: absolute; right: -5px; top: -4px; width: 9px; height: 9px; border-radius: 50%; background: #ff4d4d; }
```
